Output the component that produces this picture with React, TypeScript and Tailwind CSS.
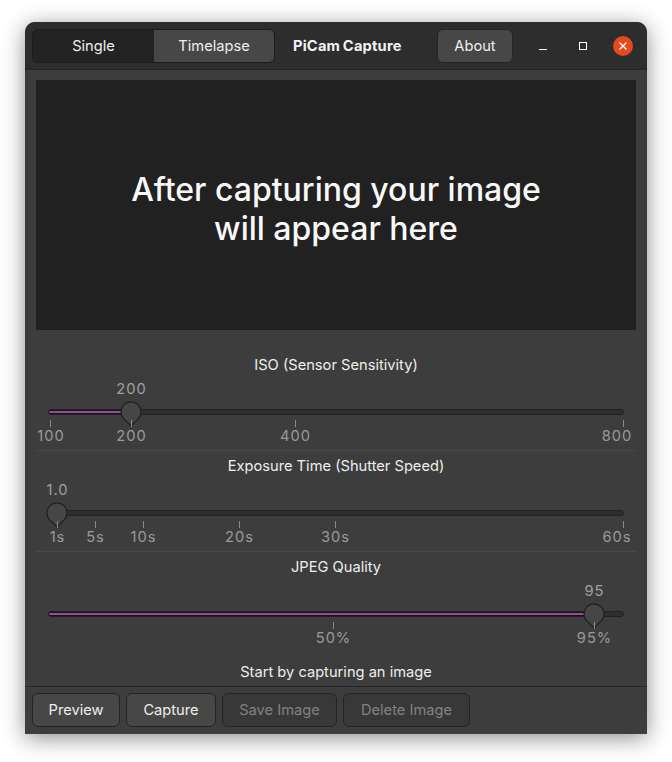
type Mark = { x: number; label: string; labelX?: number }

const ticks: Record<'iso' | 'exposure' | 'quality', Mark[]> = {
  iso: [
    { x: 13.5, label: '100', labelX: 15 },
    { x: 95, label: '200' },
    { x: 259, label: '400' },
    // the last labels get pushed in from the edge
    { x: 587, label: '800', labelX: 581 },
  ],
  exposure: [
    { x: 21, label: '1s' },
    { x: 59, label: '5s' },
    { x: 107, label: '10s' },
    { x: 203, label: '20s' },
    { x: 299, label: '30s' },
    { x: 587, label: '60s', labelX: 581 },
  ],
  quality: [
    { x: 297, label: '50%' },
    { x: 558, label: '95%' },
  ],
}

type SliderProps = {
  title: string
  value: string
  thumbX: number
  marks: Mark[]
  last?: boolean
}

function Slider({ title, value, thumbX, marks, last }: SliderProps) {
  return (
    <section className={`h-[101px] pt-[6px] ${last ? '' : 'border-b border-[#484848]'}`}>
      <p className="h-[18px] text-center text-[14.67px] leading-[18px] text-[#eeeeee]">{title}</p>
      <div className="relative mt-[6px] h-[70px]">
        <span
          className="absolute top-0 -translate-x-1/2 text-[14.67px] leading-[18px] tracking-[1px] text-[#a0a0a0]"
          style={{ left: thumbX + 0.5 }}
        >
          {value}
        </span>
        <div className="absolute left-[12px] right-[12px] top-[29px] h-[6px] rounded-full border border-[#222222] bg-[#2e2e2e]" />
        {thumbX > 40 && (
          <div
            className="absolute left-[12px] top-[30px] h-[4px] rounded-l-full border border-[#151515] bg-[#9c4a98]"
            style={{ width: thumbX - 12 }}
          />
        )}
        <svg
          className="absolute top-[21px] -translate-x-1/2"
          style={{ left: thumbX }}
          width="22"
          height="26"
          viewBox="0 0 22 26"
        >
          <path
            d="M11 25 L3.6 17.6 A10 10 0 1 1 18.4 17.6 Z"
            fill="#464646"
            stroke="#1f1f1f"
            strokeWidth="1.2"
          />
        </svg>
        {marks.map((mark) => (
          <div key={mark.label}>
            <div className="absolute top-[40px] h-[7px] w-px bg-[#8a8a8a]" style={{ left: mark.x }} />
            <span
              className="absolute top-[47px] -translate-x-1/2 text-[14.67px] leading-[18px] tracking-[1px] text-[#9a9a9a]"
              style={{ left: mark.labelX ?? mark.x + 0.5 }}
            >
              {mark.label}
            </span>
          </div>
        ))}
      </div>
    </section>
  )
}

function FooterButton({ label, width, disabled }: { label: string; width: string; disabled?: boolean }) {
  return (
    <button
      className={`h-[34px] rounded-[6px] border border-[#242424] text-[14.67px] ${width} ${
        disabled ? 'bg-[#383838] text-[#828282]' : 'bg-[#474747] text-[#eeeeee]'
      }`}
    >
      {label}
    </button>
  )
}

export default function App() {
  return (
    <div className="h-[762px] w-[672px] bg-white pl-[25px] pt-[22px] font-['Inter',sans-serif]">
      <div className="flex h-[712px] w-[622px] flex-col rounded-t-[10px] bg-[#3d3d3d] shadow-[0_4px_22px_rgba(0,0,0,0.45)]">
        <header className="flex h-[48px] shrink-0 items-center rounded-t-[10px] border-b border-[#252525] bg-[#2d2d2d] pl-[7px]">
          <div className="flex h-[34px] w-[243px] overflow-hidden rounded-[6px] border border-[#1c1c1c] text-[14.67px] text-[#eeeeee]">
            <div className="flex w-[121px] items-center justify-center bg-[#232323]">Single</div>
            <div className="flex flex-1 items-center justify-center bg-[#474747]">Timelapse</div>
          </div>
          <h1 className="ml-[18px] w-[127px] text-[14.67px] font-bold tracking-[0.2px] text-[#f2f2f2] [word-spacing:-1px]">PiCam Capture</h1>
          <button className="ml-[17px] h-[34px] w-[76px] rounded-[6px] border border-[#252525] bg-[#474747] text-[14.67px] text-[#eeeeee]">
            About
          </button>
          <div className="ml-[26px] flex items-center">
            <div className="mt-[7px] h-px w-[8px] bg-white" />
            <div className="ml-[32px] h-[8px] w-[8px] border border-white" />
            <div className="ml-[26px] flex h-[20px] w-[20px] items-center justify-center rounded-full bg-[#e5491d]">
              <svg width="10" height="10" viewBox="0 0 10 10">
                <path d="M1.5 1.5 L8.5 8.5 M8.5 1.5 L1.5 8.5" stroke="white" strokeWidth="1.4" />
              </svg>
            </div>
          </div>
        </header>

        <main className="flex flex-1 flex-col">
          <div className="mx-[11px] mt-[10px] flex h-[250px] items-center justify-center bg-[#212121] pt-[8px] text-center text-[32px] font-medium leading-[39px] text-[#f8f8f8]">
            <p>
              After capturing your image
              <br />
              will appear here
            </p>
          </div>
          <div className="mx-[11px] mt-[20px]">
            <Slider title="ISO (Sensor Sensitivity)" value="200" thumbX={95} marks={ticks.iso} />
            <Slider title="Exposure Time (Shutter Speed)" value="1.0" thumbX={21} marks={ticks.exposure} />
            <Slider title="JPEG Quality" value="95" thumbX={558} marks={ticks.quality} last />
          </div>
          <p className="mt-[10px] text-center text-[14.67px] leading-[18px] text-[#eeeeee]">Start by capturing an image</p>
        </main>

        <footer className="flex h-[48px] shrink-0 items-start gap-[6px] border-t border-[#252525] pl-[7px] pt-[6px]">
          <FooterButton label="Preview" width="w-[88px]" />
          <FooterButton label="Capture" width="w-[90px]" />
          <FooterButton label="Save Image" width="w-[115px]" disabled />
          <FooterButton label="Delete Image" width="w-[127px]" disabled />
        </footer>
      </div>
    </div>
  )
}
